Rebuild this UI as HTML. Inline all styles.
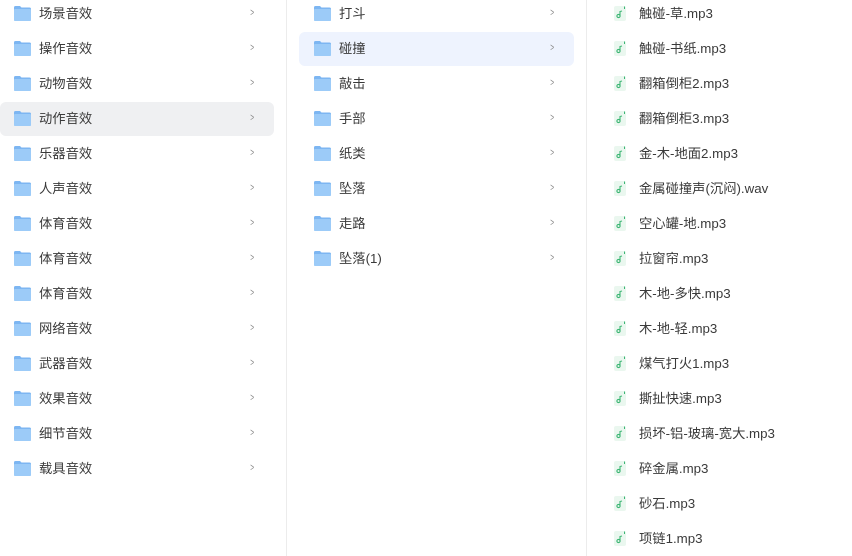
<!DOCTYPE html>
<html><head><meta charset="utf-8"><style>
*{margin:0;padding:0;box-sizing:border-box}
body{width:852px;height:556px;background:#fff;overflow:hidden;position:relative;font-family:"Liberation Sans","Noto Sans CJK SC",sans-serif;font-size:13.3px;color:#3a3a3a}
.sep{position:absolute;top:0;width:1px;height:556px;background:#ececec}
.row{position:absolute;height:34px;display:flex;align-items:center;border-radius:6px}
.row .t{position:absolute;top:8px;line-height:18px}
.ch{position:absolute;color:#888;font-size:11px;transform:scaleX(.6);top:10px}
.fold{position:absolute;width:17px;height:15px}
.fi{position:absolute;width:12px;height:15px;background:#eaf7ef;border-radius:2px}
</style></head><body>
<div class="sep" style="left:286px"></div>
<div class="sep" style="left:586px"></div>
<div id="c"></div>
<script>
const folder='<svg class="fold" viewBox="0 0 17 15"><path d="M0 1.5Q0 0 1.5 0H6L7.5 1.5H15.5Q17 1.5 17 3V13.5Q17 15 15.5 15H1.5Q0 15 0 13.5Z" fill="#7db6f2"/><rect x="0" y="3" width="17" height="12" rx="1" fill="#9ccbf8"/></svg>';
const c1=["场景音效","操作音效","动物音效","动作音效","乐器音效","人声音效","体育音效","体育音效","体育音效","网络音效","武器音效","效果音效","细节音效","载具音效"];
const c2=["打斗","碰撞","敲击","手部","纸类","坠落","走路","坠落(1)"];
const c3=["触碰-草.mp3","触碰-书纸.mp3","翻箱倒柜2.mp3","翻箱倒柜3.mp3","金-木-地面2.mp3","金属碰撞声(沉闷).wav","空心罐-地.mp3","拉窗帘.mp3","木-地-多快.mp3","木-地-轻.mp3","煤气打火1.mp3","撕扯快速.mp3","损坏-铝-玻璃-宽大.mp3","碎金属.mp3","砂石.mp3","项链1.mp3"];
let h='';
c1.forEach((t,i)=>{let y=-3+35*i;h+=`<div class="row" style="left:0;top:${y}px;width:274px;${i==3?'background:#eff0f2':''}"><div style="position:absolute;left:14px;top:9px">${folder}</div><span class="t" style="left:39px">${t}</span><span class="ch" style="left:249px">&gt;</span></div>`});
c2.forEach((t,i)=>{let y=-3+35*i;h+=`<div class="row" style="left:299px;top:${y}px;width:275px;${i==1?'background:#eef3fe':''}"><div style="position:absolute;left:15px;top:9px">${folder}</div><span class="t" style="left:40px">${t}</span><span class="ch" style="left:250px">&gt;</span></div>`});
c3.forEach((t,i)=>{let y=-3+35*i;h+=`<div class="row" style="left:600px;top:${y}px;width:240px"><div class="fi" style="left:14px;top:9px"><svg width="12" height="15" viewBox="0 0 12 15"><circle cx="4.5" cy="10" r="1.6" fill="none" stroke="#3bb573" stroke-width="1.1"/><path d="M6 10V5.5L8 5" stroke="#3bb573" stroke-width="1.1" fill="none"/><path d="M10.5 0.5V3" stroke="#3bb573" stroke-width="1"/></svg></div><span class="t" style="left:39px">${t}</span></div>`});
document.getElementById('c').innerHTML=h;
</script>
</body></html>
